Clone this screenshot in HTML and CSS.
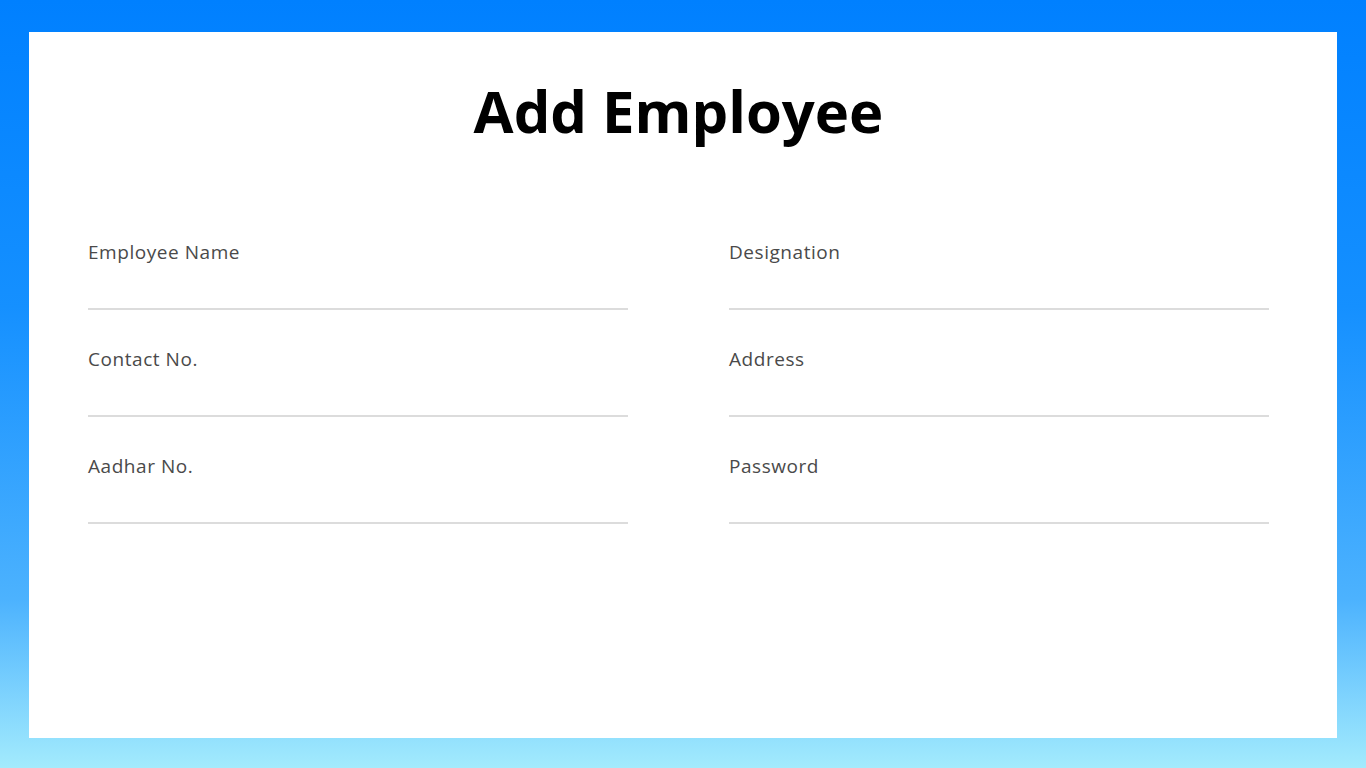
FILE: index.html
```html
<!DOCTYPE html>
<html lang="en">
<head>
  <meta charset="UTF-8">
  <meta name="viewport" content="width=device-width, initial-scale=1.0">
  <title>Add Employee</title>
  <link rel="stylesheet" href="styles.css">
</head>
<body>
  <div class="card">
    <h1>Add Employee</h1>

    <form class="form-grid">
      <div class="field">
        <label for="name">Employee Name</label>
        <input id="name" type="text">
      </div>
      <div class="field">
        <label for="designation">Designation</label>
        <input id="designation" type="text">
      </div>
      <div class="field">
        <label for="contact">Contact No.</label>
        <input id="contact" type="text">
      </div>
      <div class="field">
        <label for="address">Address</label>
        <input id="address" type="text">
      </div>
      <div class="field">
        <label for="aadhar">Aadhar No.</label>
        <input id="aadhar" type="text">
      </div>
      <div class="field">
        <label for="password">Password</label>
        <input id="password" type="password">
      </div>
    </form>
  </div>
</body>
</html>
```

FILE: styles.css
```css
html, body {
  height: 100%;
}

body {
  margin: 0;
  font-family: "Open Sans", "Noto Sans", Arial, sans-serif;
  background: linear-gradient(to bottom, #0080ff 0%, #1590ff 40%, #4cb2fe 78%, #a3ebfd 100%);
  color: #444;
  box-sizing: border-box;
  padding: 32px 29px 30px 29px;
}

.card {
  background-color: white;
  height: 706px;
  box-sizing: border-box;
  padding: 0 68px 0 59px;
}

h1 {
  margin: 0;
  padding-top: 44px;
  text-align: center;
  font-family: "Open Sans", Arial, sans-serif;
  font-size: 58px;
  font-weight: 700;
  line-height: 70px;
  color: #000;
}

.form-grid {
  display: grid;
  grid-template-columns: 540px 540px;
  column-gap: 101px;
  margin-top: 94px;
}

.field {
  display: flex;
  flex-direction: column;
  height: 107px;
}

.field label {
  font-size: 19px;
  line-height: 24px;
  letter-spacing: 0.55px;
  color: #4a4a4a;
}

.field input {
  border: none;
  border-bottom: 2px solid #dcdcdc;
  outline: none;
  height: 44px;
  padding: 0;
  font-size: 16px;
  font-family: inherit;
  background: transparent;
}
```
